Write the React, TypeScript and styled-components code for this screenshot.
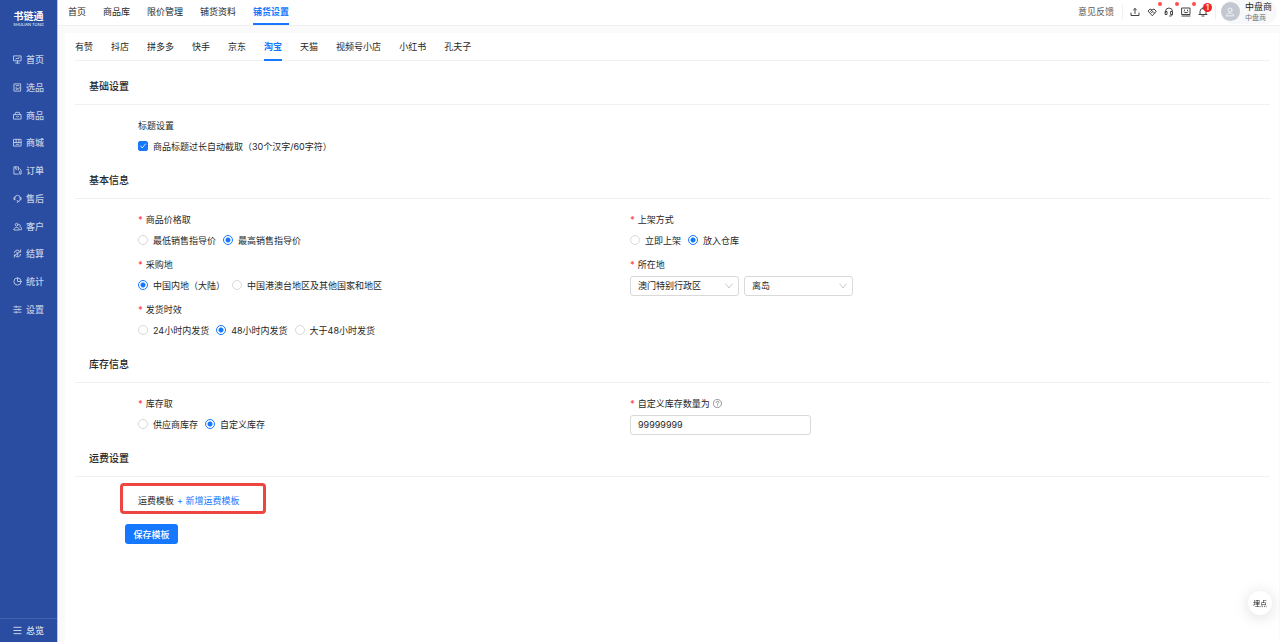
import React, { useState } from "react";
import styled, { createGlobalStyle, css } from "styled-components";

const blue = "#1677ff";
const line = "#f0f0f0";

const GlobalStyle = createGlobalStyle`
  * { box-sizing: border-box; }
  body {
    margin: 0;
    background: #fafafa;
    color: #262626;
    font-family: Inter, "Noto Sans CJK SC", sans-serif;
    font-size: 9px;
    line-height: 17px;
  }
  button, input, select { font: inherit; color: inherit; }
  button { border: 0; padding: 0; background: none; cursor: pointer; }
  a { color: inherit; text-decoration: none; }
`;

const Shell = styled.div`
  display: flex;
  min-height: 100vh;
`;

const Sidebar = styled.aside`
  position: sticky;
  top: 0;
  display: flex;
  flex: none;
  flex-direction: column;
  width: 58px;
  height: 100vh;
  background: #2a4da2;
  border-right: 1px solid #b9c6e2;
  color: #c3cee5;
`;

const Logo = styled.a`
  display: flex;
  flex-direction: column;
  align-items: center;
  gap: 1px;
  height: 46px;
  padding-top: 10px;
  color: #fff;
`;

const LogoName = styled.strong`
  font-size: 10px;
  line-height: 12px;
`;

const LogoCaption = styled.span`
  font-size: 4px;
  font-weight: 400;
  line-height: 4px;
`;

const SideList = styled.nav`
  display: grid;
  grid-auto-rows: 1fr;
  height: 277px;
`;

const sideRow = css`
  display: flex;
  align-items: center;
  gap: 4px;
  padding-left: 13px;
  font-weight: 500;
`;

const SideLink = styled.a`
  ${sideRow}
`;

const SideFooter = styled.button`
  ${sideRow}
  height: 24px;
  margin-top: auto;
  border-top: 1px solid #4463ad;
  color: #d9e0ef;
`;

const Icon = styled.svg<{ $size?: number }>`
  flex: none;
  width: ${(p) => p.$size ?? 9}px;
  height: ${(p) => p.$size ?? 9}px;
  fill: none;
  stroke: currentColor;
  stroke-width: 2;
  stroke-linecap: round;
  stroke-linejoin: round;
`;

const Main = styled.div`
  flex: 1;
  min-width: 0;
  display: flex;
  flex-direction: column;
`;

const Header = styled.header`
  display: flex;
  align-items: center;
  height: 26px;
  padding: 0 3px 2px 10px;
  background: #fff;
  border-bottom: 1px solid ${line};
`;

const TopNav = styled.nav`
  display: flex;
  align-self: flex-start;
  gap: 17px;
  height: 25px;
  margin-right: auto;
`;

const navItem = css<{ $active?: boolean }>`
  border-bottom: 2px solid ${(p) => (p.$active ? blue : "transparent")};
  color: ${(p) => (p.$active ? blue : "inherit")};
  font-weight: ${(p) => (p.$active ? 700 : 400)};
  white-space: nowrap;
`;

const TopLink = styled.a<{ $active?: boolean }>`
  ${navItem}
  line-height: 24px;
`;

const Feedback = styled.a`
  padding-right: 8px;
  color: #595959;
  line-height: 24px;
`;

const Tools = styled.div`
  display: flex;
  align-items: center;
  gap: 7px;
  height: 14px;
  padding: 0 7px;
  border: solid ${line};
  border-width: 0 1px;
`;

const Tool = styled.button`
  position: relative;
  display: flex;
  color: #434343;
`;

const Dot = styled.span`
  position: absolute;
  top: -5px;
  right: -5px;
  width: 4px;
  height: 4px;
  border-radius: 50%;
  background: #ff4d4f;
`;

const Count = styled.span`
  position: absolute;
  top: -4px;
  right: -4px;
  width: 9px;
  height: 9px;
  border-radius: 50%;
  background: #f5222d;
  color: #fff;
  font-size: 7px;
  font-weight: 600;
  line-height: 9px;
  text-align: center;
`;

const Profile = styled.button`
  display: flex;
  align-items: center;
  gap: 5px;
  height: 24px;
  margin-left: 5px;
  padding-right: 5px;
  border-radius: 12px;
  background: #f7f8fa;
  text-align: left;
`;

const Avatar = styled.span`
  display: grid;
  place-items: center;
  width: 19px;
  height: 19px;
  border-radius: 50%;
  background: #c3c8d0;
  color: #eef0f3;
`;

const ProfileText = styled.span`
  display: flex;
  flex-direction: column;
  line-height: 11px;
`;

const ProfileRole = styled.small`
  color: #737373;
  font-size: 7px;
`;

const Card = styled.main`
  flex: 1;
  margin: 7px 1px 0 7px;
  padding: 0 9px 24px 10px;
  background: #fff;
`;

const Tabs = styled.div`
  display: flex;
  gap: 18px;
  height: 28px;
  margin-bottom: 8px;
  border-bottom: 1px solid ${line};
`;

const Tab = styled.button<{ $active?: boolean }>`
  ${navItem}
  height: 28px;
  padding-top: 1px;
  line-height: 26px;
`;

const SectionTitle = styled.h2`
  height: 36px;
  margin: 0;
  padding-left: 14px;
  border-bottom: 1px solid ${line};
  font-size: 10px;
  font-weight: 500;
  line-height: 35px;
`;

const Fields = styled.div`
  display: grid;
  grid-template-columns: repeat(2, minmax(0, 1fr));
  padding: 12px 148px 1px 63px;
`;

const Field = styled.div<{ $alone?: boolean }>`
  display: grid;
  grid-template-rows: 17px 20px;
  gap: 3px;
  margin: 0 0 5px;
  grid-column: ${(p) => (p.$alone ? "1 / -1" : "auto")};
`;

const FieldLabel = styled.label`
  display: flex;
  align-items: center;
  gap: 3px;
`;

const Star = styled.span`
  color: #ff4d4f;
  font-weight: 600;
`;

const Options = styled.div`
  display: flex;
  align-items: center;
  gap: 7px;
  height: 18px;
`;

const Option = styled.label`
  display: flex;
  align-items: center;
  gap: 5px;
  height: 18px;
  white-space: nowrap;
`;

const Radio = styled.input.attrs({ type: "radio" })`
  appearance: none;
  width: 10px;
  height: 10px;
  margin: 0;
  border: 1px solid #d9d9d9;
  border-radius: 50%;
  background: #fff;
  &:checked {
    border-color: ${blue};
    background: radial-gradient(circle, ${blue} 2px, #fff 3px);
  }
`;

const CheckWrap = styled.span`
  display: grid;
  place-items: center;
  width: 10px;
  height: 10px;
  color: #fff;
  > * { grid-area: 1 / 1; }
  svg { pointer-events: none; }
`;

const Checkbox = styled.input.attrs({ type: "checkbox" })`
  appearance: none;
  width: 10px;
  height: 10px;
  margin: 0;
  border: 1px solid #d9d9d9;
  border-radius: 2px;
  &:checked {
    border-color: ${blue};
    background: ${blue};
  }
`;

const Controls = styled.div`
  display: flex;
  gap: 5px;
`;

const SelectWrap = styled.span`
  display: grid;
  align-items: center;
  width: 109px;
  color: #bfbfbf;
  > * { grid-area: 1 / 1; }
  svg {
    justify-self: end;
    margin-right: 6px;
    pointer-events: none;
  }
`;

const inputBox = css`
  height: 20px;
  padding: 0 7px 1px;
  border: 1px solid #d9d9d9;
  border-radius: 3px;
  background: #fff;
  color: #262626;
`;

const Select = styled.select`
  ${inputBox}
  appearance: none;
  width: 100%;
`;

const TextInput = styled.input`
  ${inputBox}
  width: 181px;
`;

const Freight = styled.div`
  display: flex;
  align-items: center;
  gap: 3px;
  width: 146px;
  height: 31px;
  margin: 6px 0 10px 45px;
  padding: 3px 0 0 15px;
  border: 3px solid #ee4540;
  border-radius: 4px;
  white-space: nowrap;
`;

const AddLink = styled.a`
  color: ${blue};
`;

const SaveButton = styled.button`
  height: 20px;
  min-width: 53px;
  margin-left: 50px;
  padding: 0 8px;
  border-radius: 3px;
  background: ${blue};
  color: #fff;
  font-weight: 500;
`;

const FloatButton = styled.button`
  position: fixed;
  right: 8px;
  bottom: 27px;
  width: 24px;
  height: 24px;
  border-radius: 50%;
  background: #fff;
  box-shadow: 0 2px 16px rgba(0, 0, 0, 0.14);
  font-size: 7px;
  text-align: center;
`;

const sideItems: [string, React.ReactNode][] = [
  ["首页", <path d="M2 2h16v11H2zM6 18h8M10 13v5M6 9l3-2 2 2 3-4" />],
  ["选品", <path d="M3 2h14v16H3zM7 6h6M7 10v4h2M10 12l2 2 3-4" />],
  ["商品", <path d="M2 8h16v10H2zM4 8l2-5h8l2 5M7 12c1 2 5 2 6 0" />],
  ["商城", <path d="M2 3h16v15H2zM2 10h16M7 3v7M13 3v7M7 14h6" />],
  ["订单", <path d="M12 18H2V2h10v7M6 2v5h3M15 6l3 3v9h-3v-6" />],
  ["售后", <path d="M4 13V9a6 6 0 0 1 12 0v3a5 5 0 0 1-5 5M4 8H2v4h2M16 8h2v4h-2M9 14l3 3-3 2" />],
  ["客户", <><circle cx="8" cy="6" r="3" /><path d="M2 17c0-7 12-7 12 0zM13 5c4 0 4 4 2 5 3 1 4 3 4 7h-3" /></>],
  ["结算", <path d="M3 8a7 7 0 0 1 13-2M17 2v5h-4M17 12a7 7 0 0 1-13 2M3 18v-5h4M8 7l2 3 2-3M10 10v4M8 11h4" />],
  ["统计", <><circle cx="10" cy="10" r="8" /><path d="M10 2v8h8" /></>],
  ["设置", <path d="M2 4h16M2 10h16M2 16h16M7 2v4M13 8v4M7 14v4" />],
];

const toolItems: [string, React.ReactNode][] = [
  ["上传", <path d="M2 12v5h16v-5M10 13V3M7 6l3-3 3 3" />],
  ["合作", <path d="M10 17L2 8l4-4 4 2 4-2 4 4zM10 6L7 9l2 2 3-2 3 3" />],
  ["客服", <path d="M3 11V9a7 7 0 0 1 14 0v3M3 9h3v6H3zM14 9h3v6h-3zM17 15c0 3-3 3-6 3" />],
  ["学堂", <path d="M2 2h16v13H2zM2 18h16M7 6v1M13 6v1M6 10c2 2 6 2 8 0" />],
  ["通知", <path d="M2 15h16M4 15V9a6 6 0 0 1 12 0v6M8 18h4M10 1v2" />],
];

const topItems = ["首页", "商品库", "限价管理", "铺货资料", "铺货设置"];
const platforms = ["有赞", "抖店", "拼多多", "快手", "京东", "淘宝", "天猫", "视频号小店", "小红书", "孔夫子"];

function RadioField({ name, label, options, initial, alone }: {
  name: string; label: string; options: string[]; initial: number; alone?: boolean;
}) {
  const [value, setValue] = useState(initial);
  return (
    <Field $alone={alone} role="radiogroup" aria-labelledby={name}>
      <FieldLabel as="div" id={name}><Star>*</Star>{label}</FieldLabel>
      <Options>
        {options.map((text, i) => (
          <Option key={text}>
            <Radio name={name} checked={value === i} onChange={() => setValue(i)} />
            {text}
          </Option>
        ))}
      </Options>
    </Field>
  );
}

function Dropdown({ id, label, options }: { id?: string; label: string; options: string[] }) {
  return (
    <SelectWrap>
      <Select id={id} aria-label={label}>
        {options.map((o) => <option key={o}>{o}</option>)}
      </Select>
      <Icon $size={8} viewBox="0 0 20 20"><path d="M2 5l8 10 8-10" /></Icon>
    </SelectWrap>
  );
}

export default function App() {
  const [tab, setTab] = useState("淘宝");
  return (
    <>
      <GlobalStyle />
      <Shell>
        <Sidebar>
          <Logo href="#">
            <LogoName>书链通</LogoName>
            <LogoCaption>SHULIAN TONG</LogoCaption>
          </Logo>
          <SideList>
            {sideItems.map(([text, drawing]) => (
              <SideLink href="#" key={text}>
                <Icon viewBox="0 0 20 20">{drawing}</Icon>
                {text}
              </SideLink>
            ))}
          </SideList>
          <SideFooter>
            <Icon viewBox="0 0 20 20"><path d="M2 3h16M2 10h16M2 17h16" /></Icon>
            总览
          </SideFooter>
        </Sidebar>

        <Main>
          <Header>
            <TopNav>
              {topItems.map((text) => (
                <TopLink href="#" key={text} $active={text === "铺货设置"}>{text}</TopLink>
              ))}
            </TopNav>
            <Feedback href="#">意见反馈</Feedback>
            <Tools>
              {toolItems.map(([label, drawing], i) => (
                <Tool key={label} aria-label={label}>
                  <Icon $size={10} viewBox="0 0 20 20">{drawing}</Icon>
                  {i > 0 && i < 4 && <Dot />}
                  {i === 4 && <Count>1</Count>}
                </Tool>
              ))}
            </Tools>
            <Profile>
              <Avatar>
                <Icon $size={10} viewBox="0 0 20 20">
                  <circle cx="10" cy="6" r="4" />
                  <path d="M3 17c0-7 14-7 14 0z" />
                </Icon>
              </Avatar>
              <ProfileText>
                中盘商
                <ProfileRole>中盘商</ProfileRole>
              </ProfileText>
            </Profile>
          </Header>

          <Card>
            <Tabs role="tablist">
              {platforms.map((p) => (
                <Tab key={p} role="tab" aria-selected={p === tab} $active={p === tab} onClick={() => setTab(p)}>
                  {p}
                </Tab>
              ))}
            </Tabs>

            <section>
              <SectionTitle>基础设置</SectionTitle>
              <Fields>
                <Field $alone>
                  <FieldLabel as="div">标题设置</FieldLabel>
                  <Option>
                    <CheckWrap>
                      <Checkbox defaultChecked />
                      <Icon $size={8} viewBox="0 0 20 20"><path d="M4 10l4 5 8-10" /></Icon>
                    </CheckWrap>
                    商品标题过长自动截取（30个汉字/60字符）
                  </Option>
                </Field>
              </Fields>
            </section>

            <section>
              <SectionTitle>基本信息</SectionTitle>
              <Fields>
                <RadioField name="price" label="商品价格取" options={["最低销售指导价", "最高销售指导价"]} initial={1} />
                <RadioField name="listing" label="上架方式" options={["立即上架", "放入仓库"]} initial={1} />
                <RadioField name="origin" label="采购地" options={["中国内地（大陆）", "中国港澳台地区及其他国家和地区"]} initial={0} />
                <Field>
                  <FieldLabel htmlFor="region"><Star>*</Star>所在地</FieldLabel>
                  <Controls>
                    <Dropdown id="region" label="所在地" options={["澳门特别行政区"]} />
                    <Dropdown label="所在城区" options={["离岛"]} />
                  </Controls>
                </Field>
                <RadioField name="delivery" label="发货时效" options={["24小时内发货", "48小时内发货", "大于48小时发货"]} initial={1} alone />
              </Fields>
            </section>

            <section>
              <SectionTitle>库存信息</SectionTitle>
              <Fields>
                <RadioField name="stock" label="库存取" options={["供应商库存", "自定义库存"]} initial={1} />
                <Field>
                  <FieldLabel htmlFor="amount">
                    <Star>*</Star>自定义库存数量为
                    <Icon viewBox="0 0 20 20" color="#8c8c8c">
                      <circle cx="10" cy="10" r="9" />
                      <path d="M7 8c0-4 6-4 6-1 0 2-3 2-3 5M10 15v.1" />
                    </Icon>
                  </FieldLabel>
                  <TextInput id="amount" defaultValue="99999999" />
                </Field>
              </Fields>
            </section>

            <section>
              <SectionTitle>运费设置</SectionTitle>
              <Freight>
                运费模板
                <AddLink href="#">+ 新增运费模板</AddLink>
              </Freight>
              <SaveButton>保存模板</SaveButton>
            </section>
          </Card>
        </Main>
        <FloatButton>埋点</FloatButton>
      </Shell>
    </>
  );
}
